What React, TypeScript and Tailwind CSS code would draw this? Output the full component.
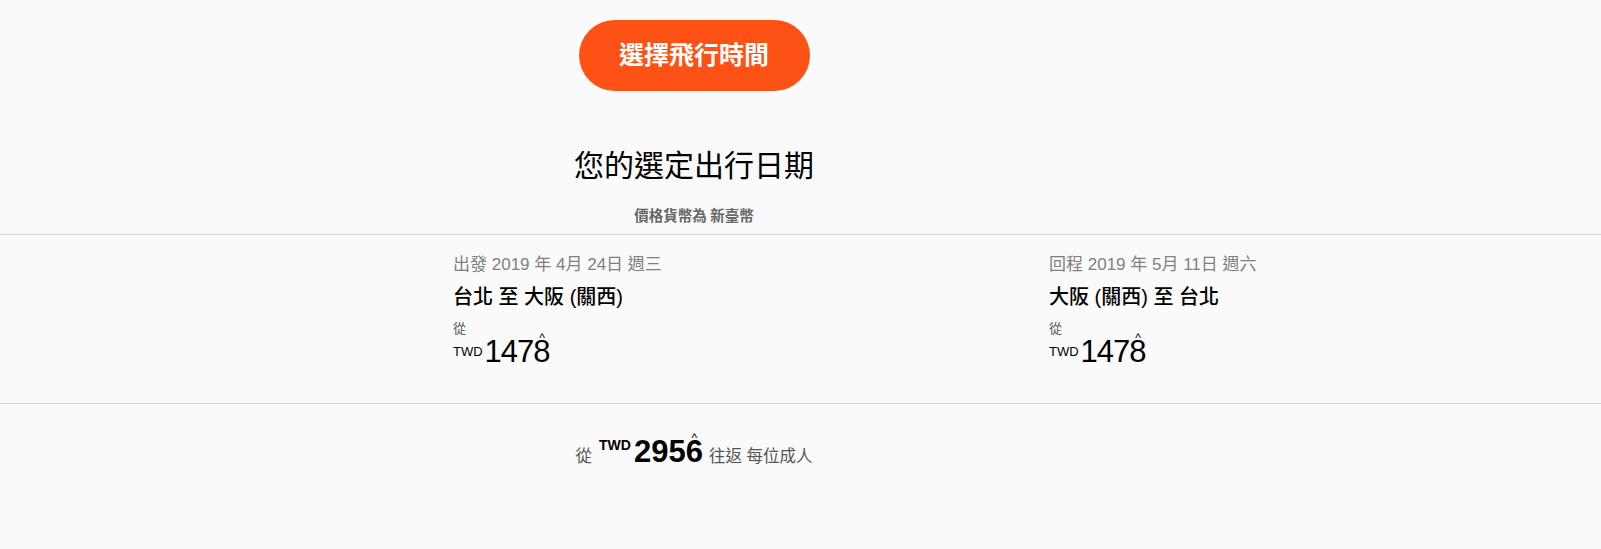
import React from "react";

const sans = { fontFamily: '"Liberation Sans", Arial, "Noto Sans CJK TC", sans-serif' };
const serif = { fontFamily: '"Liberation Serif", "Noto Sans CJK TC", serif' };

function Hat({ children, className }: { children: React.ReactNode; className?: string }) {
  return (
    <span className="relative inline-block">
      {children}
      <span className={"absolute left-1/2 -translate-x-1/2 text-black font-normal " + (className ?? "")}>^</span>
    </span>
  );
}

function Leg({ label, date, route }: { label: string; date: string; route: string }) {
  return (
    <div className="w-[596px] shrink-0 flex flex-col" style={sans}>
      <div className="text-[17px] leading-[20px] text-[#808080]">
        {label} {date}
      </div>
      <div className="mt-[10px] text-[20px] leading-[24px] text-black font-medium">{route}</div>
      <div className="mt-[13px] text-[13px] leading-[14px] text-[#555]">從</div>
      <div className="flex items-end leading-none">
        <span className="text-[13px] text-black mb-[9px]">TWD</span>
        <span className="text-[31px] text-black ml-[2px] tracking-[-1px]">
          147
          <Hat className="text-[12px] top-[-4px]">8</Hat>
        </span>
      </div>
    </div>
  );
}

export default function App() {
  return (
    <div className="w-full min-h-[549px] bg-[#fafafa] overflow-hidden">
      <div className="pl-[453px] pt-[20px]">
        <div className="w-[482px] flex flex-col items-center">
          <button
            className="w-[231px] h-[71px] rounded-full bg-[#fe5116] text-white text-[25px] font-bold"
            style={serif}
          >
            選擇飛行時間
          </button>
          <h1 className="mt-[57px] text-[30px] leading-[36px] text-black font-normal" style={serif}>
            您的選定出行日期
          </h1>
          <div className="mt-[23px] text-[14.5px] leading-[18px] font-bold text-[#666]" style={serif}>
            價格貨幣為 新臺幣
          </div>
        </div>
      </div>
      <div className="mt-[9px] border-t border-[#d6d6d6]" />
      <div className="pl-[453px] pt-[20px] pb-[36px] flex">
        <Leg label="出發" date="2019 年 4月 24日 週三" route="台北 至 大阪 (關西)" />
        <Leg label="回程" date="2019 年 5月 11日 週六" route="大阪 (關西) 至 台北" />
      </div>
      <div className="border-t border-[#d6d6d6]" />
      <div className="pl-[453px] pt-[32px]">
        <div className="w-[482px] flex justify-center items-end leading-none" style={sans}>
          <span className="text-[16.5px] text-[#555] mb-[3px]">從</span>
          <span className="ml-[7px] text-[14px] font-bold text-black mb-[15px]">TWD</span>
          <span className="ml-[3px] text-[31px] font-bold text-black">
            295
            <Hat className="text-[12px] top-[-4px]">6</Hat>
          </span>
          <span className="ml-[6px] text-[16.5px] text-[#555] mb-[3px]">往返 每位成人</span>
        </div>
      </div>
    </div>
  );
}
